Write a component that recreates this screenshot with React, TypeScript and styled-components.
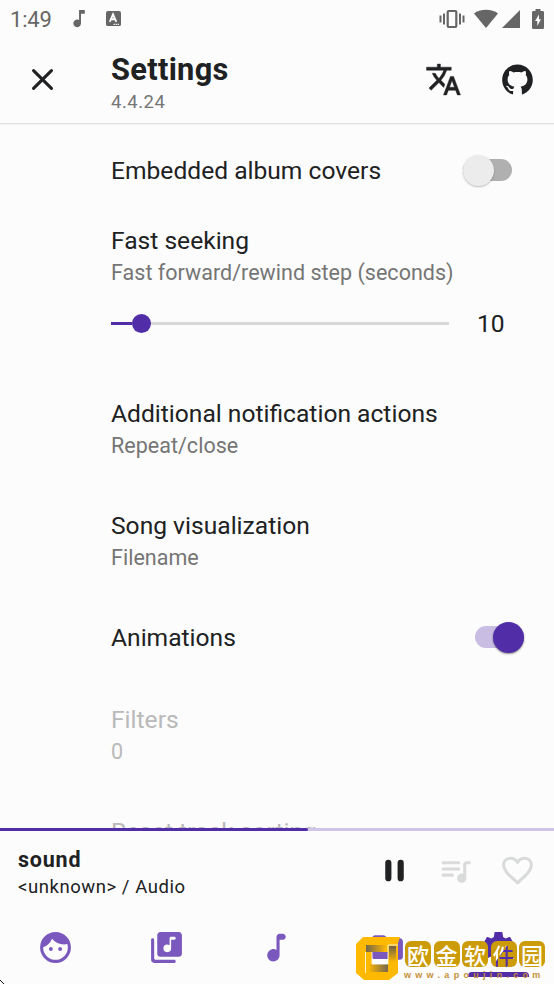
import React from "react";
import styled, { createGlobalStyle, css } from "styled-components";
import { AiFillGithub } from "react-icons/ai";

const ink = "#202122";
const purple = "#512da8";
const softPurple = "#7a58bd";
const grey = "#757575";
const paper = "#fcfcfc";

const GlobalStyle = createGlobalStyle`
  * { box-sizing: border-box; }
  body { margin: 0; background: ${paper}; }
`;

const Screen = styled.main`
  position: relative;
  display: flex;
  flex-direction: column;
  width: 554px;
  height: 984px;
  overflow: hidden;
  background: ${paper};
  color: ${ink};
  font-family: Roboto, sans-serif;
`;

const StatusBar = styled.div`
  display: flex;
  align-items: center;
  flex: none;
  height: 37px;
  padding: 0 10px 0 10px;
  color: #666;
`;

const Clock = styled.span`
  width: 59px;
  font-size: 22px;
  line-height: 36px;
  padding-top: 2px;
  letter-spacing: -0.2px;
`;

const StatusGroup = styled.div<{ $end?: boolean }>`
  display: flex;
  align-items: center;
  margin-left: ${(p) => (p.$end ? "auto" : "0")};
`;

const Glyph = styled.svg<{ $w: number; $h?: number; $gap?: number }>`
  display: block;
  flex: none;
  width: ${(p) => p.$w}px;
  height: ${(p) => p.$h ?? p.$w}px;
  margin-left: ${(p) => p.$gap ?? 0}px;
  fill: currentColor;
`;

const AppBar = styled.header`
  display: flex;
  align-items: center;
  flex: none;
  height: 87px;
  padding: 0 22px 1px 24px;
  border-bottom: 1px solid #e2e2e2;
  box-shadow: 0 1px 1px #f1f1f1;
`;

const Heading = styled.div`
  display: flex;
  flex-direction: column;
  flex: 1;
  margin-left: 50px;
  padding-top: 9px;
`;

const ScreenTitle = styled.h1`
  margin: 0;
  font-size: 30.8px;
  line-height: 36px;
  letter-spacing: 0.3px;
  font-weight: 700;
`;

const Version = styled.span`
  font-size: 18.5px;
  line-height: 29px;
  letter-spacing: 0.5px;
  color: ${grey};
`;

const ToolButton = styled.button`
  display: grid;
  place-items: center;
  width: 37px;
  height: 37px;
  padding: 0;
  border: 0;
  background: none;
  color: ${ink};
`;

const Tools = styled.div`
  display: flex;
  gap: 37px;
  margin-right: -3.5px;
`;

const List = styled.section`
  flex: none;
  height: 704px;
  padding: 7px 0 0 111px;
  overflow: hidden;
`;

const Row = styled.div<{ $height: number; $disabled?: boolean }>`
  height: ${(p) => p.$height}px;
  padding-top: 24px;
  ${(p) =>
    p.$disabled &&
    css`
      --title: #b9b9b9;
      --sub: #b9b9b9;
    `}
`;

const RowLine = styled.div<{ $right?: number }>`
  display: flex;
  align-items: center;
  justify-content: space-between;
  height: 32px;
  padding-right: ${(p) => p.$right ?? 0}px;
`;

const RowTitle = styled.span`
  font-size: 24.6px;
  line-height: 32px;
  white-space: nowrap;
  color: var(--title, ${ink});
`;

const RowSub = styled.div`
  font-size: 21.5px;
  line-height: 31px;
  letter-spacing: 0.02px;
  color: var(--sub, ${grey});
`;

const Switch = styled.span<{ $on?: boolean }>`
  position: relative;
  display: flex;
  align-items: center;
  justify-content: ${(p) => (p.$on ? "flex-end" : "flex-start")};
  width: 49px;
  height: 31px;
  margin-top: -2px;

  &::before {
    content: "";
    position: absolute;
    inset: 4.5px 0;
    border-radius: 11px;
    background: ${(p) => (p.$on ? "#c9bde4" : "#b0b0b0")};
  }
`;

const Thumb = styled.span<{ $on?: boolean }>`
  position: relative;
  flex: none;
  width: 31px;
  height: 31px;
  border-radius: 50%;
  background: ${(p) => (p.$on ? purple : "#ececec")};
  box-shadow: 0 1px 2px rgba(0, 0, 0, ${(p) => (p.$on ? 0.45 : 0.25)});
`;

const SliderLine = styled.div`
  display: flex;
  align-items: center;
  height: 32px;
  margin-top: 19px;
`;

const Track = styled.div`
  display: flex;
  align-items: center;
  width: 338px;
  height: 19px;
  background: linear-gradient(#d8d8d8, #d8d8d8) center / 100% 3px no-repeat;
`;

const TrackFill = styled.span`
  width: 21px;
  height: 3px;
  background: ${purple};
`;

const Knob = styled.span`
  width: 19px;
  height: 19px;
  border-radius: 50%;
  background: ${purple};
`;

const SliderValue = styled.span`
  margin-left: 28px;
  padding-top: 2px;
  font-size: 24.6px;
  line-height: 30px;
`;

const Progress = styled.div`
  flex: none;
  height: 3px;
  background: #d1c4e9;
`;

const ProgressFill = styled.div`
  width: 308px;
  height: 3px;
  border-radius: 0 2px 2px 0;
  background: ${purple};
`;

const Player = styled.section`
  display: flex;
  align-items: center;
  flex: none;
  height: 79px;
  padding: 0 18.5px 0 18px;
`;

const SongInfo = styled.div`
  display: flex;
  flex-direction: column;
  flex: 1;
  padding-top: 6px;
`;

const SongName = styled.strong`
  font-size: 21.5px;
  line-height: 27px;
  letter-spacing: 0.8px;
  font-weight: 700;
`;

const SongMeta = styled.span`
  font-size: 18.5px;
  line-height: 28px;
  letter-spacing: 0.55px;
`;

const PlayerControls = styled.div`
  display: flex;
  align-items: center;
  gap: 24.5px;
  color: #d9dada;
`;

const Nav = styled.nav`
  display: grid;
  grid-template-columns: repeat(5, 1fr);
  flex: none;
  height: 74px;
  color: ${softPurple};
`;

const Tab = styled.button<{ $active?: boolean }>`
  display: flex;
  flex-direction: column;
  align-items: center;
  justify-content: space-between;
  padding: 18.5px 0 7px;
  border: 0;
  background: none;
  color: ${(p) => (p.$active ? purple : softPurple)};
`;

const Indicator = styled.span`
  width: 61px;
  height: 5px;
  border-radius: 4px 4px 0 0;
  background: ${purple};
`;

const Brand = styled.div`
  position: absolute;
  left: 356px;
  top: 936px;
  display: flex;
  gap: 4px;
`;

const BrandWords = styled.div`
  display: flex;
  flex-direction: column;
  padding-top: 5px;
`;

const Tiles = styled.div`
  display: flex;
  gap: 2.5px;
  height: 27px;
`;

const Tile = styled.span<{ $over?: boolean }>`
  display: grid;
  place-items: center;
  width: 26px;
  height: 26px;
  border-radius: 6px;
  background: #cb9b08;

  b {
    font: 500 22px/26px "Noto Sans CJK SC", sans-serif;
    color: ${(p) => (p.$over ? "transparent" : "#fff")};
    background: ${(p) => (p.$over ? `linear-gradient(125deg, #fff 43%, ${purple} 45%, ${purple} 80%, #fff 82%)` : "none")};
    background-clip: text;
    -webkit-background-clip: text;
  }
`;

const Site = styled.span`
  margin: 1px -10px 0 -1px;
  font: 700 9px/12px "Liberation Sans", sans-serif;
  letter-spacing: 4.3px;
  white-space: nowrap;
  color: #c69139;
`;

const Corner = styled.svg`
  position: absolute;
  left: 0;
  bottom: 0;
  width: 4px;
  height: 4px;
`;

const note = "M12 5v8.55c-.94-.54-2.1-.75-3.33-.32-1.34.48-2.37 1.67-2.61 3.07-.46 2.74 1.86 5.08 4.59 4.65 1.96-.31 3.35-2.11 3.35-4.1V7h2c1.1 0 2-.9 2-2s-.9-2-2-2h-2c-1.1 0-2 .9-2 2z";

export default function App() {
  return (
    <Screen>
      <GlobalStyle />
      <StatusBar>
        <Clock>1:49</Clock>
        <StatusGroup>
          <Glyph $w={23} viewBox="0 0 24 24" aria-hidden><path d="M12 3v10.550A4 4 0 1 0 14 17V7h4V3z" transform="translate(-1.500 0)" /></Glyph>
          <Glyph $w={15} $gap={14} viewBox="0 0 16 16" aria-hidden>
            <path d="M2 0h12a2 2 0 0 1 2 2v12a2 2 0 0 1-2 2H2a2 2 0 0 1-2-2V2a2 2 0 0 1 2-2z" />
            <path d="m4 11.500 3.500-8 3.500 8M5.600 8.800h3.800" fill="none" stroke="#fff" strokeWidth="1.900" />
            <path d="M8 14.200h1.400m.8 0h1.400m.8 0h1.400" fill="none" stroke="#fff" strokeWidth="1.200" />
          </Glyph>
        </StatusGroup>
        <StatusGroup $end>
          <Glyph $w={26} $h={20} viewBox="0 0 26 20" aria-hidden>
            <path d="M.5 6.500h2v7h-2zM4 4.500h2v11H4zM20 4.500h2v11h-2zM23.500 6.500h2v7h-2z" />
            <rect x="8.700" y="2" width="8.600" height="16" rx="1" fill="none" stroke="currentColor" strokeWidth="2.200" />
          </Glyph>
          <Glyph $w={24} $h={19} $gap={9.5} viewBox="0 0 24 19" aria-hidden><path d="M0 4.400C3.200 2 7.200.8 12 .8S20.800 2 24 4.400L12 19z" /></Glyph>
          <Glyph $w={18} $h={18} $gap={4} viewBox="0 0 18 18" aria-hidden><path d="M18 0v18H0z" /></Glyph>
          <Glyph $w={12} $h={20} $gap={12} viewBox="0 0 12 20" aria-hidden>
            <path fillRule="evenodd" d="M3.500 0h5v2h2.200A1.300 1.300 0 0 1 12 3.300v15.400a1.300 1.300 0 0 1-1.300 1.300H1.300A1.300 1.300 0 0 1 0 18.700V3.300A1.300 1.300 0 0 1 1.300 2h2.200zM7 5.500 3 12h2.300v5L9 10.200H7z" />
          </Glyph>
        </StatusGroup>
      </StatusBar>

      <AppBar>
        <ToolButton aria-label="Close">
          <Glyph $w={37} viewBox="0 0 24 24"><path d="m6.200 6.200 11.600 11.600M17.800 6.200 6.200 17.800" fill="none" stroke="currentColor" strokeWidth="2" strokeLinecap="round" /></Glyph>
        </ToolButton>
        <Heading>
          <ScreenTitle>Settings</ScreenTitle>
          <Version>4.4.24</Version>
        </Heading>
        <Tools>
          <ToolButton aria-label="Language">
            <Glyph $w={37} viewBox="0 0 24 24"><path d="m12.870 15.070-2.540-2.510.030-.030A17.520 17.520 0 0 0 14.070 6H17V4h-7V2H8v2H1v2h11.170C11.500 7.920 10.440 9.750 9 11.350 8.070 10.320 7.300 9.190 6.690 8h-2c.730 1.630 1.730 3.170 2.980 4.560l-5.090 5.020L4 19l5-5 3.110 3.110zM18.500 10h-2L12 22h2l1.120-3h4.750L21 22h2zm-2.620 7 1.620-4.330L19.120 17z" stroke="currentColor" strokeWidth=".3" /></Glyph>
          </ToolButton>
          <ToolButton aria-label="GitHub"><AiFillGithub size={35} /></ToolButton>
        </Tools>
      </AppBar>

      <List>
        <Row $height={70}>
          <RowLine $right={42}>
            <RowTitle>Embedded album covers</RowTitle>
            <Switch><Thumb /></Switch>
          </RowLine>
        </Row>
        <Row $height={173}>
          <RowLine><RowTitle>Fast seeking</RowTitle></RowLine>
          <RowSub>Fast forward/rewind step (seconds)</RowSub>
          <SliderLine>
            <Track><TrackFill /><Knob /></Track>
            <SliderValue>10</SliderValue>
          </SliderLine>
        </Row>
        <Row $height={112}>
          <RowLine><RowTitle>Additional notification actions</RowTitle></RowLine>
          <RowSub>Repeat/close</RowSub>
        </Row>
        <Row $height={112}>
          <RowLine><RowTitle>Song visualization</RowTitle></RowLine>
          <RowSub>Filename</RowSub>
        </Row>
        <Row $height={82}>
          <RowLine $right={30}>
            <RowTitle>Animations</RowTitle>
            <Switch $on><Thumb $on /></Switch>
          </RowLine>
        </Row>
        <Row $height={112} $disabled>
          <RowLine><RowTitle>Filters</RowTitle></RowLine>
          <RowSub>0</RowSub>
        </Row>
        <Row $height={112} $disabled>
          <RowLine><RowTitle>Reset track sorting</RowTitle></RowLine>
        </Row>
      </List>

      <Progress><ProgressFill /></Progress>
      <Player>
        <SongInfo>
          <SongName>sound</SongName>
          <SongMeta>&lt;unknown&gt; / Audio</SongMeta>
        </SongInfo>
        <PlayerControls>
          <Glyph $w={37} viewBox="0 0 24 24" color={ink}><path d="M8 7v10M16 7v10" fill="none" stroke="currentColor" strokeWidth="4" strokeLinecap="round" /></Glyph>
          <Glyph $w={37} viewBox="0 0 24 24"><path d="M14 6H4c-.550 0-1 .450-1 1s.450 1 1 1h10c.550 0 1-.450 1-1s-.450-1-1-1zm0 4H4c-.550 0-1 .450-1 1s.450 1 1 1h10c.550 0 1-.450 1-1s-.450-1-1-1zM4 16h6c.550 0 1-.450 1-1s-.450-1-1-1H4c-.550 0-1 .450-1 1s.450 1 1 1zM19 6c-1.100 0-2 .900-2 2v6.180a3 3 0 1 0 2 2.820V8h2c.550 0 1-.450 1-1s-.450-1-1-1z" /></Glyph>
          <Glyph $w={37} viewBox="0 0 24 24"><path d="M12 20 10.700 18.800C5.900 14.500 3 11.900 3 8.500 3 5.700 5 4 7.500 4 9.300 4 11 5 12 6.700 13 5 14.700 4 16.500 4 19 4 21 5.700 21 8.500c0 3.400-2.900 6-7.700 10.300z" fill="none" stroke="currentColor" strokeWidth="2" strokeLinejoin="round" /></Glyph>
        </PlayerControls>
      </Player>

      <Nav>
        <Tab aria-label="Artists">
          <Glyph $w={37} viewBox="0 0 24 24"><path d="M10.250 13a1.250 1.250 0 1 1-2.500 0 1.250 1.250 0 0 1 2.500 0zM15 11.750a1.250 1.250 0 1 0 0 2.500 1.250 1.250 0 0 0 0-2.500zM22 12a10 10 0 1 1-20 0 10 10 0 0 1 20 0zm-2 0c0-.780-.120-1.530-.330-2.240-.700.150-1.420.240-2.170.240a10 10 0 0 1-7.760-3.690A10.020 10.020 0 0 1 4 11.860V12a8 8 0 0 0 16 0z" /></Glyph>
        </Tab>
        <Tab aria-label="Albums">
          <Glyph $w={37} viewBox="0 0 24 24"><path d="M20 2H8c-1.100 0-2 .900-2 2v12c0 1.100.900 2 2 2h12c1.100 0 2-.900 2-2V4c0-1.100-.900-2-2-2zm-3 5h-2v5.500a2.500 2.500 0 1 1-2.500-2.500c.570 0 1.080.190 1.500.510V6c0-.550.450-1 1-1h2c.550 0 1 .450 1 1s-.450 1-1 1zM3 6c-.550 0-1 .450-1 1v13c0 1.100.900 2 2 2h13c.550 0 1-.450 1-1s-.450-1-1-1H5c-.550 0-1-.450-1-1V7c0-.550-.450-1-1-1z" /></Glyph>
        </Tab>
        <Tab aria-label="Tracks">
          <Glyph $w={37} viewBox="0 0 24 24"><path d={note} /></Glyph>
        </Tab>
        <Tab aria-label="Folders">
          <Glyph $w={37} viewBox="0 0 24 24"><path d="M10.590 4.590C10.210 4.210 9.700 4 9.170 4H4c-1.100 0-2 .900-2 2v12c0 1.100.900 2 2 2h16c1.100 0 2-.900 2-2V8c0-1.100-.900-2-2-2h-8z" /></Glyph>
        </Tab>
        <Tab $active aria-label="Settings">
          <Glyph $w={37} viewBox="0 0 24 24"><path fillRule="evenodd" d="m19.500 12 .0-.9 2-1.600c.2-.1.200-.4.100-.6l-2-3.500c-.1-.2-.4-.3-.6-.2l-2.400 1c-.5-.4-1-.7-1.600-1l-.4-2.700c0-.3-.2-.5-.5-.5h-4.200c-.3 0-.5.200-.5.500L9 5.200c-.6.300-1.100.6-1.600 1L5 5.200c-.2-.1-.5 0-.6.200l-2 3.500c-.1.200-.1.500.1.600l2 1.600v1.800l-2 1.600c-.2.100-.2.400-.1.600l2 3.500c.1.200.4.300.6.200l2.400-1c.5.400 1 .7 1.600 1l.4 2.700c0 .3.200.5.500.5h4.200c.3 0 .5-.2.5-.5l.4-2.700c.6-.3 1.100-.6 1.600-1l2.400 1c.2.100.5 0 .6-.2l2-3.500c.1-.2.100-.5-.1-.6l-2-1.600zM12 9a3 3 0 1 1 0 6 3 3 0 0 1 0-6z" /></Glyph>
          <Indicator />
        </Tab>
      </Nav>

      <Brand>
        <Glyph $w={45} $h={45} viewBox="0 0 45 45" aria-hidden>
          <defs>
            <linearGradient id="fade"><stop stopColor="#75664f" /><stop offset="1" stopColor="#ffb900" /></linearGradient>
            <linearGradient id="fadeBack"><stop stopColor="#ffb900" /><stop offset="1" stopColor="#75664f" /></linearGradient>
            <linearGradient id="fadeDown" x2="0" y2="1"><stop stopColor="#6f6048" /><stop offset=".9" stopColor="#ffb900" /></linearGradient>
          </defs>
          <path fillRule="evenodd" d="M7 1h37l-2 6v30l-9 7H8l-8-7V8zM16 16h16v12H16z" fill="#ffb900" />
          <path d="M10 9h21l-4 7H10z" fill="url(#fade)" />
          <path d="M33 10h7v18h-7z" fill="url(#fadeDown)" />
          <path d="M14 28h18v8H12z" fill="url(#fadeBack)" />
          <path d="M16 23h16v5H16z" fill={paper} />
          <path d="M9.500 16v21M16 16v12h16M32 28V9h10" fill="none" stroke="#fff" strokeWidth=".8" />
        </Glyph>
        <BrandWords>
          <Tiles>
            <Tile><b>欧</b></Tile>
            <Tile><b>金</b></Tile>
            <Tile><b>软</b></Tile>
            <Tile $over><b>件</b></Tile>
            <Tile><b>园</b></Tile>
          </Tiles>
          <Site>www.apoujin.com</Site>
        </BrandWords>
      </Brand>
      <Corner viewBox="0 0 4 4" aria-hidden><path d="M0 0h1v1H0zM1 1h1v1H1zM2 2h1v1H2zM3 3h1v1H3z" fill="#111" /></Corner>
    </Screen>
  );
}
